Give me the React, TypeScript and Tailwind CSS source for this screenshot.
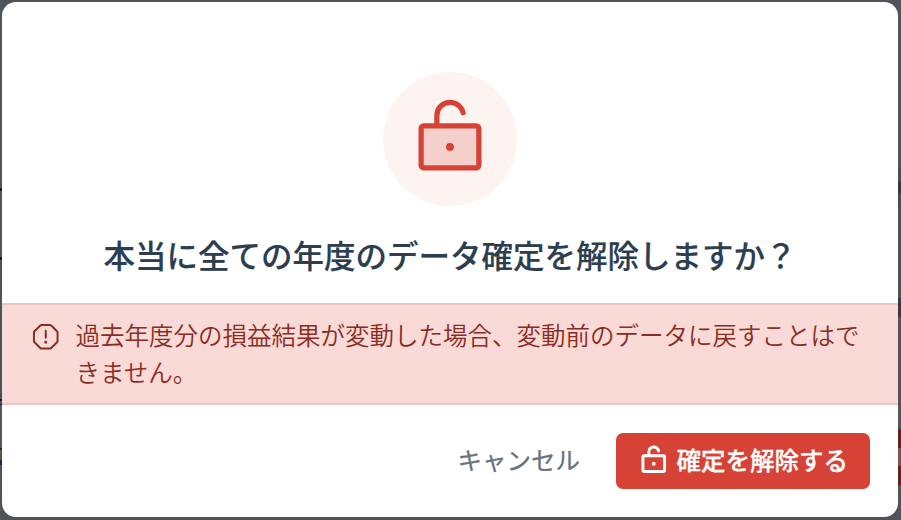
import React from "react";
import { PiLockOpenBold, PiLockOpenDuotone, PiWarningOctagon } from "react-icons/pi";

interface Mark {
  height: string;
  color: string;
}

const leftMarks: Mark[] = [
  { height: "h-[188px]", color: "bg-[#51565b]" },
  { height: "h-[3px]", color: "bg-[#15181d]" },
  { height: "h-[66px]", color: "bg-[#51565b]" },
  { height: "h-[3px]", color: "bg-[#15181d]" },
  { height: "h-[134px]", color: "bg-[#4d5357]" },
  { height: "h-[2px]", color: "bg-[#35506f]" },
  { height: "h-[3px]", color: "bg-[#4d5357]" },
  { height: "h-[2px]", color: "bg-[#111b38]" },
  { height: "h-[3px]", color: "bg-[#4d5357]" },
  { height: "h-[1px]", color: "bg-[#111b38]" },
  { height: "h-[43px]", color: "bg-[#54585d]" },
  { height: "h-[2px]", color: "bg-[#22262b]" },
  { height: "h-[4px]", color: "bg-[#54585d]" },
  { height: "h-[6px]", color: "bg-[#704a42]" },
  { height: "h-[5px]", color: "bg-[#182852]" },
];

const rightMarks: Mark[] = [
  { height: "h-[169px]", color: "bg-[#50565b]" },
  { height: "h-[13px]", color: "bg-[#42505c]" },
  { height: "h-[11px]", color: "bg-[#2b3c49]" },
  { height: "h-[13px]", color: "bg-[#42505c]" },
  { height: "h-[92px]", color: "bg-[#4e5357]" },
  { height: "h-[19px]", color: "bg-[#353c43]" },
  { height: "h-[112px]", color: "bg-[#50565b]" },
  { height: "h-[19px]", color: "bg-[#65201d]" },
  { height: "h-[18px]", color: "bg-[#80514f]" },
  { height: "h-[19px]", color: "bg-[#65201d]" },
];

const Backdrop: React.FC<{ marks: Mark[] }> = ({ marks }) => (
  <div className="h-full flex-1">
    {marks.map((mark, i) => (
      <div key={i} className={`${mark.height} ${mark.color}`} />
    ))}
  </div>
);

export default function App() {
  return (
    <div className="flex h-[520px] w-[901px] overflow-hidden bg-[#50545a] font-['Noto_Sans_CJK_JP',sans-serif]">
      <div className="flex w-[2px]">
        <Backdrop marks={leftMarks} />
      </div>
      <div className="mt-[2px] flex h-[515px] w-[896px] flex-col rounded-[14px] bg-white">
        <div className="flex h-[301px] flex-col items-center pt-[70px]">
          <div className="flex size-[134px] items-center justify-center rounded-full bg-[#fdf3f1]">
            <PiLockOpenDuotone className="size-[84px] text-[#d64235]" />
          </div>
          <h1 className="mt-[25px] text-[31.5px] leading-[47px] font-medium whitespace-nowrap text-[#2c3e50] [-webkit-text-stroke:0.15px_#2c3e50]">
            本当に全ての年度のデータ確定を解除しますか？
          </h1>
        </div>
        <div className="flex h-[102px] gap-[14px] border-y-2 border-[#e8c7c4] bg-[#fadad7] pt-3 pl-7 text-[#8a2c22]">
          <PiWarningOctagon className="mt-[4px] size-[31.5px] shrink-0" />
          <p className="w-[790px] text-[24.5px] leading-[36.75px] font-[350]">
            過去年度分の損益結果が変動した場合、変動前のデータに戻すことはできません。
          </p>
        </div>
        <div className="flex flex-1 items-start justify-end gap-[36px] pt-7 pr-7">
          <button className="h-14 pb-[2px] text-[24.5px] font-normal text-[#67737c] [-webkit-text-stroke:0.25px_#67737c]">
            キャンセル
          </button>
          <button className="flex h-14 w-[254px] items-center justify-center gap-[7px] rounded-[7px] bg-[#d64235] text-[24.5px] font-medium whitespace-nowrap text-white">
            <PiLockOpenBold className="size-[31.5px]" />
            <span className="pb-[2px] [-webkit-text-stroke:0.3px_white]">確定を解除する</span>
          </button>
        </div>
      </div>
      <div className="flex w-[3px]">
        <Backdrop marks={rightMarks} />
      </div>
    </div>
  );
}
